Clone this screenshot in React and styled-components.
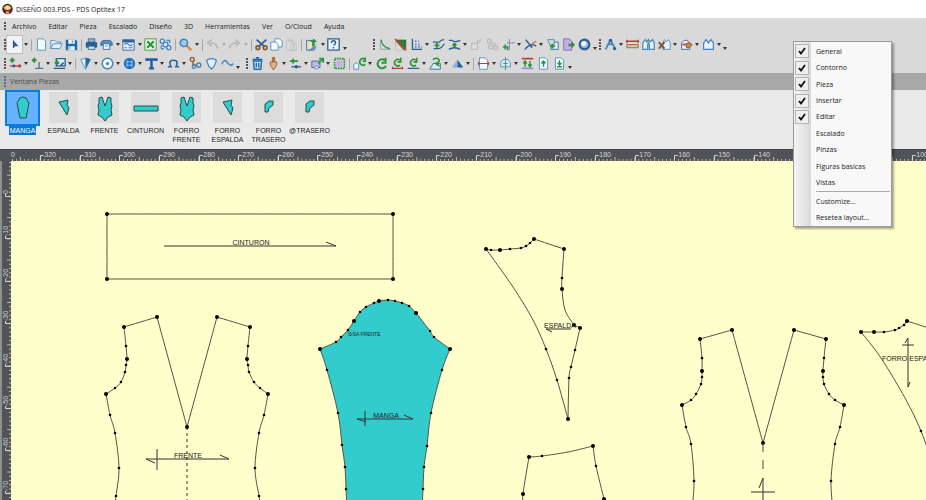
import React, { useEffect, useState } from "react";
import styled, { createGlobalStyle, css } from "styled-components";

const GlobalStyle = createGlobalStyle`
  *, *::before, *::after { box-sizing: border-box; }
  body { margin: 0; overflow: hidden; }
  button, input { margin: 0; padding: 0; border: 0; background: none; font: inherit; color: inherit; }
  ul { margin: 0; padding: 0; list-style: none; }
`;

const uiFont = `"Open Sans", "Noto Sans", sans-serif`;
const cadFont = `"Liberation Sans", Arial, sans-serif`;

const Window = styled.div`
  position: relative;
  display: flex;
  flex-direction: column;
  height: 100vh;
  overflow: hidden;
  background: #d9d9d9;
  color: #222;
  font-family: ${uiFont};
  font-size: 7px;
`;

const TitleBar = styled.header`
  display: flex;
  flex: none;
  align-items: center;
  gap: 3px;
  height: 18px;
  padding-left: 2px;
  background: #fff;
  color: #222;
`;

const Title = styled.h1`
  margin: 0;
  font-size: 7px;
  font-weight: 400;
  white-space: nowrap;
`;

const MenuBar = styled.nav`
  display: flex;
  flex: none;
  align-items: center;
  gap: 12px;
  height: 17px;
  padding-left: 3px;
`;

const MenuButton = styled.button`
  color: #222;
  white-space: nowrap;
`;

const Grip = styled.span`
  flex: none;
  width: 4px;
  height: 12px;
  background: radial-gradient(circle at 2px 1px, #555 1px, transparent 1px) 0 0 / 4px 3px;
`;

const MenuGrip = styled(Grip)`
  height: 9px;
  margin-right: -7px;
`;

const ToolRow = styled.div`
  display: flex;
  flex: none;
  align-items: center;
  height: 19px;
  padding-left: 3px;
`;

const ToolGroup = styled.div`
  display: flex;
  align-items: center;
  margin-left: ${(p) => p.$before || 0}px;
`;

const ToolButton = styled.button`
  display: grid;
  place-items: center;
  width: ${(p) => (p.$wide ? 16 : 15)}px;
  height: 17px;
  opacity: ${(p) => (p.disabled ? 0.75 : 1)};
  ${(p) =>
    p.$active &&
    css`
      background: #f3f3f3;
      outline: 1px solid #bdbdbd;
    `}
`;

const DropButton = styled.button`
  display: grid;
  place-items: center;
  width: ${(p) => (p.$wide ? 6 : 7)}px;
  height: 17px;
  ${(p) => p.$overflow && css`padding-top: 7px;`}
  &::after {
    content: "";
    border: 2px solid transparent;
    border-top: 3px solid ${(p) => (p.disabled ? "#aaa" : "#333")};
    border-bottom: 0;
  }
`;

const Separator = styled.span`
  width: ${(p) => (p.$wide ? 4 : 5)}px;
  height: 12px;
  background: linear-gradient(#a6a6a6, #a6a6a6) center / 1px 100% no-repeat;
`;

const PanelTitle = styled.h2`
  display: flex;
  flex: none;
  align-items: center;
  gap: 3px;
  height: 17px;
  margin: 0;
  padding-left: 4px;
  background: #a8a8a8;
  color: #4c4c4c;
  font-size: 7px;
  font-weight: 400;
`;

const PanelGrip = styled(Grip)`
  width: 3px;
  background: radial-gradient(circle at 1px 1px, #4f6f9c 1px, transparent 1px) 0 0 / 3px 3px;
`;

const PieceStrip = styled.div`
  display: flex;
  flex: none;
  height: 59px;
  padding-left: 2px;
  background: #eaeaea;
`;

const PieceButton = styled.button`
  display: flex;
  flex-direction: column;
  align-items: center;
  width: 41px;
  font-family: ${cadFont};
  font-size: 7px;
  line-height: 9px;
`;

const Thumb = styled.span`
  display: grid;
  place-items: center;
  width: ${(p) => (p.$selected ? 35 : 29)}px;
  height: ${(p) => (p.$selected ? 36 : 31)}px;
  margin: ${(p) => (p.$selected ? "0" : "2px 0 3px")};
  background: ${(p) => (p.$selected ? "#66b2ff" : "#dcdcdc")};
  border: ${(p) => (p.$selected ? "2px solid #0a7be0" : "0")};
`;

const PieceLabel = styled.span`
  padding: 0 1px;
  background: ${(p) => (p.$selected ? "#0a78d7" : "transparent")};
  color: ${(p) => (p.$selected ? "#fff" : "#222")};
`;

const Workspace = styled.main`
  display: grid;
  flex: 1;
  grid-template: 11px minmax(0, 1fr) / 11px minmax(0, 1fr);
  min-height: 0;
  background: #525358;
  border-top: 1px solid #3d3f40;
`;

const TopRuler = styled.svg`
  grid-column: 1 / 3;
  display: block;
  width: 100%;
  height: 11px;
`;

const SideRuler = styled.svg`
  display: block;
  width: 11px;
  height: 100%;
  border-left: 2px solid #8b9090;
`;

const Board = styled.svg`
  display: block;
  width: 100%;
  height: 100%;
  background: #ffffcc;
`;

const Popup = styled.form`
  position: absolute;
  top: 41px;
  right: 34px;
  width: 99px;
  padding: 1px;
  border: 1px solid #999;
  background: linear-gradient(90deg, #f4f4f4, #d9d9d9 17px, #f8f8f8 17px);
  box-shadow: 2px 2px 2px rgba(0, 0, 0, 0.35);
`;

const ToggleList = styled.ul`
  display: grid;
  grid-template-rows: repeat(9, 1fr);
  height: 148px;
`;

const Toggle = styled.label`
  display: grid;
  grid-template-columns: 14px 1fr;
  align-items: center;
  gap: 7px;
  height: 100%;
  white-space: nowrap;
`;

const ToggleBox = styled.span`
  display: grid;
  place-items: center;
  > * { grid-area: 1 / 1; }
`;

const ToggleInput = styled.input`
  appearance: none;
  width: 14px;
  height: 14px;
  border: 1px solid transparent;
  &:checked {
    background: #eee;
    border-color: #b3b3b3;
  }
`;

const PopupRule = styled.hr`
  height: 1px;
  margin: 0 0 1px 21px;
  border: 0;
  background: #aaa;
`;

const PopupAction = styled.button`
  display: block;
  height: 16px;
  padding-left: 21px;
  white-space: nowrap;
`;

/* ---------- toolbar drawings, 16 x 16 ---------- */
const navy = "#2b5f94";
const blue = "#4385bd";
const green = "#2a9438";
const red = "#c3393b";
const page = <path d="M3 1h7l3 3v11H3z" fill="#f6faff" stroke={blue} />;
const plusAt = (x, y) => (
  <path d={`M${x} ${y - 3}v6M${x - 3} ${y}h6`} stroke={green} strokeWidth="2.4" />
);
const turn = (
  <path d="M11 4a4 4 0 1 0 0 6M12 1v5H8" stroke={green} strokeWidth="2" />
);

const drawings = {
  pointer: <path d="M6 2v11l3-3h4z" fill={navy} />,
  fresh: page,
  open: <path d="M1 13V3h5l2 2h5v2M1 13 4 7h11l-3 6z" fill="#e3eef8" stroke={blue} />,
  save: (
    <>
      <path d="M1 2h12l2 2v11H1z" fill="#1c69a5" />
      <path d="M4 2h8v5H4zM4 10h8v5H4z" fill="#edf4fa" />
      <path d="M9 3v3M6 11v3" stroke="#1c69a5" />
    </>
  ),
  print: (
    <>
      <path d="M4 1h8v4H4z" fill="#8db5d8" stroke={navy} />
      <path d="M2 5h12l1 1v5l-1 1H2l-1-1V6z" fill={navy} />
      <path d="M4 10h8v4H4z" fill="#cfe1f0" stroke={navy} />
    </>
  ),
  plotter: (
    <>
      <path d="M1 9V6q1-3 4-3h6q3 0 4 3v3z" fill="#5c8fbe" stroke={navy} />
      <path d="M4 7h8v7H4z" fill="#eef5fb" stroke={navy} />
      <path d="M6 9q2 3 4 0" stroke={blue} />
    </>
  ),
  table: (
    <>
      <path d="M1 2h14v13H1z" fill="#e3eef8" stroke={navy} />
      <path d="M1 4h14" stroke={navy} strokeWidth="3" />
      <path d="M3 8q3-3 5 0t5 0M3 12h3M8 12h5" stroke={blue} strokeWidth="1.5" />
    </>
  ),
  excel: (
    <>
      <path d="M1 1h14v14H1z" fill="#e5f3e5" stroke={green} />
      <path d="m4 4 8 8M12 4l-8 8" stroke={green} strokeWidth="2.6" />
    </>
  ),
  link: (
    <g stroke={blue} strokeWidth="1.6" fill="#d9e8f5">
      <circle cx="4" cy="4" r="2.5" />
      <circle cx="8" cy="8" r="3" />
      <circle cx="12" cy="12" r="2.5" />
      <path d="M9 3h4v3M3 9v4h3" />
    </g>
  ),
  zoom: (
    <>
      <path d="m9 9 6 6" stroke="#d48a38" strokeWidth="3" />
      <circle cx="6" cy="6" r="4.5" fill="#9cc9e8" stroke={blue} strokeWidth="2" />
    </>
  ),
  undo: <path d="M14 13q0-7-9-7M7 2 2 6l5 4" stroke="#adadad" strokeWidth="2" />,
  redo: <path d="M2 13q0-7 9-7M9 2l5 4-5 4" stroke="#adadad" strokeWidth="2" />,
  cut: (
    <>
      <path d="m2 2 10 9M14 2 4 11" stroke={navy} strokeWidth="2.2" />
      <circle cx="3.5" cy="12" r="2.3" stroke="#87592f" strokeWidth="2" />
      <circle cx="12.5" cy="12" r="2.3" stroke="#87592f" strokeWidth="2" />
    </>
  ),
  copy: (
    <g fill="#f4f9fd" stroke={blue}>
      <path d="M6 1h6l3 3v7H6z" />
      <path d="M1 5h6l3 3v7H1z" />
    </g>
  ),
  paste: (
    <g fill="#dedede" stroke="#b5b5b5">
      <path d="M2 3h9v12H2zM4 1h5v3H4zM7 7h7v8H7zM9 10h3M9 12h3" />
    </g>
  ),
  exporter: (
    <>
      <path d="M2 3h8v12H2z" fill="#f1dfc4" stroke={navy} />
      <path d="M3 15 15 9l-3 6z" fill="#5c93c2" />
      <path d="M9 10V5H6l5-4 4 4h-3v5z" fill={green} />
    </>
  ),
  help: (
    <>
      <path d="M1 1h14v14H1z" fill="#edf5fb" stroke={navy} strokeWidth="1.6" />
      <path d="M5.500 6q0-2.500 2.500-2.500T10.500 6Q10.500 7.500 8 9M8 11v2" stroke={navy} strokeWidth="1.8" />
    </>
  ),
  corner: (
    <>
      <path d="M3 2v12h12" stroke="#7d9aa0" />
      <path d="M4 2q1 10 11 11" stroke={green} strokeWidth="1.4" />
    </>
  ),
  split: (
    <>
      <path d="M2 2h13v13H2z" fill="#2e7a38" />
      <path d="M2 4v11h10z" fill="#d9d9d9" />
      <path d="m1 1 14 14" stroke="#e03b30" strokeWidth="1.8" />
    </>
  ),
  notches: (
    <>
      <path d="M3 1v13h12" stroke={navy} strokeWidth="1.6" />
      <path d="M6 4h5M6 8h7M6 11h9" stroke={blue} strokeWidth="2" strokeDasharray="2 2" />
    </>
  ),
  curveIn: (
    <>
      <path d="M1 5h8q2-3 6-3M2 13h5q5 0 8-6" stroke={navy} strokeWidth="1.6" />
      <path d="M3 9h6M6 6v6" stroke={green} strokeWidth="2.200" />
    </>
  ),
  curveMid: (
    <>
      <path d="M1 3h4q4 3 10 0M1 14q7-4 14 0" stroke={navy} strokeWidth="1.6" />
      <circle cx="8" cy="8.500" r="2.600" fill={green} />
    </>
  ),
  ghostJoin: (
    <g stroke="#b4b4b4" fill="#e2e2e2" strokeWidth="1.5">
      <path d="M2 7h7v7H2zM7 7l7-5M9 2l3 4" />
    </g>
  ),
  ghostLink: (
    <g stroke="#b4b4b4" strokeWidth="1.8">
      <circle cx="4" cy="4" r="2.500" />
      <circle cx="6" cy="11" r="2.500" />
      <circle cx="12" cy="12" r="2.500" />
      <path d="M8 5l4 4" />
    </g>
  ),
  addLine: (
    <>
      <path d="M1 11h6v4M4 8v6" stroke={green} strokeWidth="2" />
      <path d="M9 1v14M6 6h10" stroke="#8e7bc2" strokeWidth="1.2" />
    </>
  ),
  trim: (
    <>
      <path d="m2 2 8 10M1 14q8-9 14-4" stroke={navy} strokeWidth="1.8" />
      <path d="m10 7 5-3" stroke="#d48a38" strokeWidth="2" />
    </>
  ),
  layers: (
    <>
      <path d="M6 5h9v9H6z" fill="#dcebf8" stroke={navy} />
      <path d="M2 2h8v7H5z" fill="#cbdfce" stroke={blue} />
      {plusAt(8, 10)}
    </>
  ),
  sendOut: (
    <>
      <path d="M2 1h7l3 3v11H2z" fill="#c4aee8" stroke="#7e67ae" />
      <path d="M8 7h4V4l4 4-4 5v-3H8z" fill={green} />
    </>
  ),
  orb: (
    <>
      <circle cx="8" cy="8" r="6" fill="#8fb9dc" stroke={navy} strokeWidth="2.600" />
      <circle cx="7" cy="7" r="3" fill="#fff" />
    </>
  ),
  compass: (
    <>
      <path d="M8 2 2 14M8 2l6 12M4 9q4-3 8 0" stroke={blue} strokeWidth="2.2" />
      <circle cx="8" cy="3" r="2" fill={navy} />
      <circle cx="13" cy="13" r="2" fill={navy} />
    </>
  ),
  measure: (
    <>
      <path d="M1 2v4M15 2v4M1 4h14" stroke={red} strokeWidth="1.8" />
      <path d="M1 8h14v4H1z" fill="#d9bd97" stroke="#855f45" />
    </>
  ),
  vests: (
    <path d="M1 14V6l3-4 2 3 2-3 2 3 3-3 2 4v8H9V8L8 6 7 8v6z" fill="#e8f3fb" stroke={blue} strokeWidth="1.5" />
  ),
  removePiece: (
    <>
      <path d="M6 14V6l2-4 2 3 3-3 2 4v8z" fill="#e8f3fb" stroke={blue} />
      <path d="m1 5 7 8M8 5l-7 8" stroke="#75543a" strokeWidth="2.3" />
    </>
  ),
  bag: (
    <>
      <path d="M2 14V6q3-5 7-3l3 4v7z" fill="#e5ecf5" stroke={navy} />
      <path d="M7 7q5-3 8 1l-3 4H8z" fill="#c98445" stroke="#8d5526" />
      <path d="M3 8h4" stroke={red} strokeWidth="2" />
    </>
  ),
  vest: <path d="M2 14V6l3-4 3 4 3-4 3 4v8z" fill="#e8f3fb" stroke={blue} strokeWidth="1.500" />,
  addPoint: (
    <>
      {plusAt(4, 4)}
      <path d="M1 11h14" stroke={red} strokeWidth="1.600" />
      <circle cx="6" cy="11" r="1.800" fill={navy} />
      <circle cx="13" cy="11" r="2" fill={red} />
    </>
  ),
  addNotch: (
    <>
      {plusAt(4, 4)}
      <path d="M5 14h10M10 6v8" stroke="#5c7181" strokeWidth="1.600" />
    </>
  ),
  addPiece: (
    <>
      <path d="M4 2h11v9H4zM1 14h14" fill="#e3eef8" stroke={navy} strokeWidth="1.600" />
      {plusAt(5, 7)}
      <path d="m9 11 4-4" stroke={navy} strokeWidth="2" />
    </>
  ),
  dart: (
    <>
      <path d="M2 3q6-3 12 0L8 15z" fill="#e3eef8" stroke={blue} />
      <path d="M8 1q4 0 6 2L8 15z" fill="#1c69a5" />
    </>
  ),
  circleDot: (
    <>
      <circle cx="8" cy="8" r="6.500" fill="#f5faff" stroke={blue} strokeWidth="1.800" />
      <circle cx="8" cy="8" r="2" fill={blue} />
    </>
  ),
  button: (
    <>
      <circle cx="8" cy="8" r="7" fill="#1d72bd" />
      <path d="M5 4v8M11 4v8M4 6h8M4 10h8" stroke="#a8cff0" />
    </>
  ),
  text: <path d="M2 5V3h12v2M8 3v11M5 14h6" stroke="#1c5f9f" strokeWidth="3" />,
  omega: <path d="M1 12h4Q1 4 8 4t3 8h4" stroke={navy} strokeWidth="2" />,
  stitch: (
    <>
      <circle cx="4" cy="3" r="2.500" stroke="#9a6436" strokeWidth="1.800" />
      <path d="M5 5v5h5" stroke="#9a6436" strokeWidth="2" />
      <circle cx="6" cy="12" r="2" stroke={blue} strokeWidth="1.500" />
      <circle cx="12" cy="10" r="2.500" stroke={blue} strokeWidth="1.800" />
    </>
  ),
  pleat: <path d="M5 12 2 5q1-3 6-3t6 3l-3 7-3 3z" fill="#e1effa" stroke={blue} strokeWidth="1.500" />,
  wave: <path d="M1 9q3-8 7-2t7 1" stroke={blue} strokeWidth="1.800" />,
  bin: (
    <>
      <path d="M3 5h10l-1 10H4z" fill="#d9edfb" stroke="#1c69a5" strokeWidth="1.800" />
      <path d="M2 3h12M6 1h4M6.500 7v6M9.500 7v6" stroke="#1c69a5" strokeWidth="1.800" />
    </>
  ),
  brush: (
    <>
      <path d="M6 0h4v6H6z" fill="#b8703a" />
      <path d="M4 6h8v4l-4 6-4-6z" fill="#e0b27e" stroke="#8d5a30" />
    </>
  ),
  slide: (
    <>
      <path d="M1 5h10M5 2v6" stroke={green} strokeWidth="2.200" />
      <path d="M3 12h12" stroke={navy} strokeWidth="1.600" />
      <circle cx="9" cy="12" r="2.200" fill={navy} />
    </>
  ),
  movePiece: (
    <>
      <path d="M1 5h10v8H1z" fill="#cbb3e8" stroke={navy} />
      <circle cx="7" cy="13" r="2" fill="#f5faff" stroke={blue} />
      <path d="m9 8 5-5M10 2h5v5" stroke={green} strokeWidth="2" />
    </>
  ),
  selection: (
    <>
      <path d="M2 2h12v12H2z" stroke={green} strokeWidth="2" strokeDasharray="2 1" />
      <path d="M4 4h8v8H4z" fill="#c7b2e8" />
    </>
  ),
  rotatePiece: (
    <>
      <path d="M1 15V9l3-2 3 2v6z" fill="#e8f3fb" stroke={blue} />
      <g transform="translate(4 -1)">{turn}</g>
    </>
  ),
  rotate: <path d="M12 4a5.500 5.500 0 1 0 1.500 7M13 1v6H8" stroke={green} strokeWidth="2.400" />,
  rotateEnds: (
    <>
      {turn}
      <path d="M1 14h14M2 12v3M14 12v3" stroke={red} strokeWidth="1.500" />
    </>
  ),
  rotateBase: (
    <>
      {turn}
      <path d="M1 14h14" stroke={navy} strokeWidth="1.500" />
    </>
  ),
  orient: (
    <>
      <path d="M1 15 5 8h9v7z" fill="#dcebf8" stroke={navy} />
      <path d="M5 3q5-3 7 0t-4 5l5 3" stroke={green} strokeWidth="2" />
    </>
  ),
  flip: (
    <>
      <path d="M8 3v10H1z" fill="#8bb6da" />
      <path d="M8 3v10h7z" fill="#1c5f9f" />
    </>
  ),
  cutPage: (
    <>
      {page}
      <path d="M1 8h14M2 6v4M14 6v4" stroke={red} strokeWidth="1.500" />
    </>
  ),
  unfold: (
    <>
      <path d="M2 12V7l3-4h6l3 4v5z" fill="#dcebf8" stroke={blue} />
      <path d="M8 0v16M5 8h6" stroke="#5c9a80" strokeWidth="1.400" />
    </>
  ),
  swap: (
    <>
      <path d="M1 2h14" stroke={red} strokeWidth="2" />
      <path d="M5 12V6M3 8l2-3 2 3M11 5v6M9 9l2 3 2-3" stroke={green} strokeWidth="1.800" />
      <path d="M1 14h14" stroke="#9c83d4" strokeWidth="2" />
    </>
  ),
  pageUp: (
    <>
      {page}
      <path d="M8 12V6M5.500 8 8 5l2.500 3" stroke={green} strokeWidth="1.800" />
    </>
  ),
  pageDown: (
    <>
      {page}
      <path d="M8 4v5M5.500 7 8 10l2.500-3M5 12h6" stroke={green} strokeWidth="1.600" />
    </>
  ),
};

/* "name" = button, "name-" = disabled button, "v" = arrow, "|" = separator, "~" = overflow arrow */
const toolRows = [
  [
    { name: "General", items: "pointer v | fresh open save | print plotter v table v excel link | zoom v | undo- v- redo- v- | cut copy paste- | exporter v help ~" },
    { name: "Contorno", wide: true, before: 24, items: "corner split notches v curveIn curveMid v ghostJoin- ghostLink- addLine v trim v layers sendOut orb ~" },
    { name: "Pieza", wide: true, items: "compass v measure vests removePiece v bag v vest v ~" },
  ],
  [
    { name: "Insertar", wide: true, items: "addPoint v addNotch v addPiece v | dart v circleDot v button v text v omega v stitch pleat wave ~" },
    { name: "Editar", wide: true, before: 4, items: "bin brush v slide v movePiece v selection | rotatePiece v rotate rotateEnds rotateBase v orient v flip v | cutPage v unfold v swap pageUp pageDown ~" },
  ],
];

function Toolbar({ name, items, wide, before }) {
  return (
    <ToolGroup role="toolbar" aria-label={name} $before={before}>
      <Grip />
      {items.split(" ").map((item, i) => {
        const disabled = item.endsWith("-");
        const key = disabled ? item.slice(0, -1) : item;
        if (key === "|") return <Separator key={i} $wide={wide} />;
        if (key === "v" || key === "~")
          return (
            <DropButton key={i} $wide={wide} $overflow={key === "~"} disabled={disabled} aria-label="Opciones" />
          );
        return (
          <ToolButton key={i} $wide={wide} $active={key === "pointer"} disabled={disabled} aria-label={key}>
            <svg width="13" height="13" viewBox="0 0 16 16" fill="none">
              {drawings[key]}
            </svg>
          </ToolButton>
        );
      })}
    </ToolGroup>
  );
}

/* ---------- piece thumbnails ---------- */
const thumbShapes = {
  sleeve: "M11 4q3-2 6 0l3 5-3 15h-6L8 9z",
  back: "M9 8l5-1 4-1-1 5 2 3-2 7z",
  body: "M8 4l3-1 3 9 3-9 3 1v5l1 3-1 4 1 5-4 2-3 4-3-4-4-2 1-5-1-4 1-3z",
  belt: "M2 12h24v5H2z",
  rear: "M10 10l4-3h4v4l-4 3-1 4h-3z",
};
const pieces = [
  ["MANGA", "sleeve"],
  ["ESPALDA", "back"],
  ["FRENTE", "body"],
  ["CINTURON", "belt"],
  ["FORRO FRENTE", "body"],
  ["FORRO ESPALDA", "back"],
  ["FORRO TRASERO", "rear"],
  ["@TRASERO", "rear"],
];

/* ---------- pattern geometry ----------
   Each run is a smooth curve of [x, y, node] where node 2 = corner, 1 = curve point, 0 = none. */
const patterns = [
  { runs: [[[107, 214, 2], [393, 214, 2]], [[393, 214], [393, 279, 2]], [[393, 279], [107, 279, 2]], [[107, 279], [107, 214]]] },
  {
    runs: [
      [[187, 427, 2], [157, 317, 2]],
      [[157, 317], [124, 327, 2]],
      [[124, 327], [126, 346, 1], [127, 359, 2], [126, 365, 1], [125, 372, 1], [121, 382, 1], [115, 388, 1], [106, 394, 2]],
      [[106, 394], [110, 415, 1], [115, 433, 1], [119, 468, 1], [116, 496, 1], [114, 510]],
      [[187, 427], [217, 317, 2]],
      [[217, 317], [250, 327, 2]],
      [[250, 327], [248, 346, 1], [247, 359, 2], [248, 365, 1], [249, 372, 1], [254, 382, 1], [260, 388, 1], [268, 394, 2]],
      [[268, 394], [264, 415, 1], [259, 433, 1], [255, 468, 1], [259, 496, 1], [261, 510]],
    ],
  },
  {
    fill: "#33cccc",
    outline: [
      [[347, 510], [346, 489, 1], [345, 467, 1], [342, 445, 1], [338, 413, 1], [327, 370, 1], [320, 349, 2]],
      [[320, 349], [336, 342, 1], [341, 337, 1], [348, 330, 1], [354, 321, 2], [360, 312, 1], [366, 307, 1], [374, 303, 1], [379, 301, 2], [388, 300, 1], [395, 301, 1], [402, 303, 1], [409, 306, 1], [416, 313, 2], [430, 331, 1], [434, 337, 1], [450, 349, 2]],
      [[450, 349], [442, 370, 1], [431, 413, 1], [427, 446, 1], [424, 467, 1], [423, 489, 1], [422, 510]],
    ],
  },
  {
    runs: [
      [[486, 249, 2], [491, 250, 1], [500, 250, 2], [510, 249, 1], [521, 248, 1], [526, 246, 1], [530, 243, 1], [534, 239, 2]],
      [[534, 239], [564, 249, 2]],
      [[564, 249], [562, 278, 1], [562, 289, 2], [565, 310], [574, 325, 2]],
      [[574, 325], [580, 328, 2]],
      [[580, 328], [575, 350, 1], [571, 367, 1], [569, 378, 1], [568, 419, 2]],
      [[486, 249], [513, 287], [533, 320], [546, 349, 1], [557, 380, 1], [568, 419]],
    ],
  },
  {
    runs: [
      [[523, 510], [523, 494, 2], [529, 457, 2]],
      [[529, 457], [542, 456, 1], [568, 452], [593, 446, 2]],
      [[593, 446], [596, 466, 1], [604, 499, 2]],
    ],
  },
  {
    runs: [
      [[763, 443, 2], [732, 330, 2]],
      [[732, 330], [700, 339, 2]],
      [[700, 339], [702, 358, 1], [702, 371, 2], [702, 377, 1], [701, 384, 1], [696, 394, 1], [691, 400, 1], [682, 405, 2]],
      [[682, 405], [686, 427, 1], [691, 444, 1], [694, 481, 1], [692, 510]],
      [[763, 443], [794, 330, 2]],
      [[794, 330], [826, 339, 2]],
      [[826, 339], [824, 358, 1], [823, 371, 2], [823, 377, 1], [824, 384, 1], [829, 394, 1], [835, 400, 1], [844, 405, 2]],
      [[844, 405], [840, 427, 1], [835, 444, 1], [831, 481, 1], [833, 510]],
    ],
  },
  {
    runs: [
      [[861, 332, 2], [874, 332, 2], [884, 332, 1], [895, 330, 1], [899, 328, 1], [904, 325, 1], [907, 321, 2]],
      [[907, 321], [938, 331, 2]],
      [[861, 332], [881, 358], [905, 398], [921, 431, 1], [932, 463, 1]],
    ],
  },
];

function curve(points, first) {
  let d = `${first ? "M" : "L"}${points[0][0]} ${points[0][1]}`;
  for (let i = 0; i < points.length - 1; i++) {
    const a = points[i - 1] || points[i];
    const b = points[i];
    const c = points[i + 1];
    const e = points[i + 2] || c;
    d += `C${b[0] + (c[0] - a[0]) / 6} ${b[1] + (c[1] - a[1]) / 6} ${c[0] - (e[0] - b[0]) / 6} ${c[1] - (e[1] - b[1]) / 6} ${c[0]} ${c[1]}`;
  }
  return d;
}

function Pattern({ runs, outline, fill = "none" }) {
  const list = outline || runs;
  const d = list.map((run, i) => curve(run, outline ? i === 0 : true)).join("");
  return (
    <g>
      <path d={d} fill={fill} stroke="#55553f" />
      {list.flat().map(([x, y, node], i) =>
        node ? <circle key={i} cx={x} cy={y} r={node === 2 ? 2 : 1.3} fill="#000" /> : null
      )}
    </g>
  );
}

const grainLines =
  "M164 246H336L326 242M146 459H229L220 455M146 459L155 463M157 449V470M357 419H413L404 415M357 419L366 422M365 411V426M571 329H546L552 332M763 478V510M763 478L759 488M751 492H775M908 338V387M908 338L905 343M902 345H914M908 387L910 382";

const boardLabels = [
  [251, 245, "CINTURON"],
  [188, 458, "FRENTE"],
  [386, 418, "MANGA"],
  [560, 328, "ESPALDA"],
];

const range = (n) => Array.from({ length: Math.max(0, n) }, (_, i) => i);

function HorizontalRuler({ length }) {
  const step = 39.64;
  return (
    <TopRuler fill="#d5d5d5" fontFamily={cadFont} fontSize="7">
      {range(Math.ceil((length - 12) / (step / 10))).map((i) => (
        <rect key={i} x={12 + i * (step / 10)} y={i % 5 === 2 ? 7 : 9} width="1" height="4" opacity="0.8" />
      ))}
      <text x="11" y="7">0</text>
      {range(Math.ceil((length - 40) / step)).map((i) => (
        <g key={i} transform={`translate(${Math.round(40 + i * step)} 0)`}>
          <path d="M0.500 11V5.500H3" fill="none" stroke="#d5d5d5" />
          <text x="2" y="7">{-320 + i * 10}</text>
        </g>
      ))}
    </TopRuler>
  );
}

function VerticalRuler({ length }) {
  const step = 42.4;
  return (
    <SideRuler fill="#d5d5d5" fontFamily={cadFont} fontSize="7">
      {range(Math.ceil(length / (step / 10))).map((i) => (
        <rect key={i} x={i % 5 === 3 ? 5 : 7} y={1 + i * (step / 10)} width="4" height="1" opacity="0.8" />
      ))}
      {range(Math.ceil((length - 35) / step)).map((i) => (
        <g key={i} transform={`translate(0 ${Math.round(35 + i * step)})`}>
          <path d="M9 0.500H3.500V-2" fill="none" stroke="#d5d5d5" />
          <text transform="rotate(-90)" x="2" y="6">{i ? -10 * i : 0}</text>
        </g>
      ))}
    </SideRuler>
  );
}

function useWindowSize() {
  const read = () => ({ width: window.innerWidth, height: window.innerHeight });
  const [size, setSize] = useState(read);
  useEffect(() => {
    const update = () => setSize(read());
    window.addEventListener("resize", update);
    return () => window.removeEventListener("resize", update);
  }, []);
  return size;
}

const menus = ["Archivo", "Editar", "Pieza", "Escalado", "Diseño", "3D", "Herramientas", "Ver", "O/Cloud", "Ayuda"];
const toggles = ["General", "Contorno", "Pieza", "Insertar", "Editar", "Escalado", "Pinzas", "Figuras basicas", "Vistas"];

export default function App() {
  const { width, height } = useWindowSize();
  const [shown, setShown] = useState(toggles.slice(0, 5));
  const [selected, setSelected] = useState("MANGA");
  const flip = (name) =>
    setShown((now) => (now.includes(name) ? now.filter((n) => n !== name) : [...now, name]));

  return (
    <Window>
      <GlobalStyle />
      <TitleBar>
        <svg width="11" height="12" viewBox="0 0 22 24">
          <circle cx="11" cy="12" r="10.500" fill="#3d2323" />
          <path d="M3 9q8-10 16 0l-3 5H6z" fill="#e3c23f" />
          <path d="M4 13h14l-3 8H7z" fill="#a42734" />
          <circle cx="11" cy="10" r="3.500" fill="#f7ecc8" />
          <path d="M7 21q4-8 8 0z" fill="#ded4c5" />
        </svg>
        <Title>DISEÑO 003.PDS - PDS Optitex 17</Title>
      </TitleBar>
      <MenuBar>
        <MenuGrip />
        {menus.map((m) => (
          <MenuButton key={m}>{m}</MenuButton>
        ))}
      </MenuBar>
      {toolRows.map((row, i) => (
        <ToolRow key={i}>
          {row.map((bar) => (
            <Toolbar key={bar.name} {...bar} />
          ))}
        </ToolRow>
      ))}
      <PanelTitle>
        <PanelGrip />
        Ventana Piezas
      </PanelTitle>
      <PieceStrip>
        {pieces.map(([name, shape]) => (
          <PieceButton key={name} onClick={() => setSelected(name)}>
            <Thumb $selected={name === selected}>
              <svg width="28" height="28" viewBox="0 0 28 28">
                <path d={thumbShapes[shape]} fill="#33cccc" stroke="#1f4f4f" />
              </svg>
            </Thumb>
            <PieceLabel $selected={name === selected}>{name}</PieceLabel>
          </PieceButton>
        ))}
      </PieceStrip>
      <Workspace>
        <HorizontalRuler length={width} />
        <VerticalRuler length={height - 161} />
        <Board fontFamily={cadFont} fontSize="7" fill="#222">
          <g transform="translate(-11 -161)">
            {patterns.map((p, i) => (
              <Pattern key={i} {...p} />
            ))}
            <path d="M187 427V520" stroke="#333" strokeDasharray="3 3" />
            <path d="M763 443V452M763 460V469" stroke="#444" />
            <path d={grainLines} fill="none" stroke="#333" />
            {boardLabels.map(([x, y, label]) => (
              <text key={label} x={x} y={y} textAnchor="middle">{label}</text>
            ))}
            <text x="348" y="336" fontSize="5">SISA FRENTE</text>
            <text x="882" y="361">FORRO ESPALDA</text>
          </g>
        </Board>
      </Workspace>
      <Popup aria-label="Barras de herramientas">
        <ToggleList>
          {toggles.map((name) => (
            <li key={name}>
              <Toggle>
                <ToggleBox>
                  <ToggleInput type="checkbox" checked={shown.includes(name)} onChange={() => flip(name)} />
                  {shown.includes(name) && (
                    <svg width="8" height="8" viewBox="0 0 8 8" pointerEvents="none">
                      <path d="M1 4l2 2.500L7 1" fill="none" stroke="#111" strokeWidth="1.800" />
                    </svg>
                  )}
                </ToggleBox>
                {name}
              </Toggle>
            </li>
          ))}
        </ToggleList>
        <PopupRule />
        <PopupAction type="button">Customize...</PopupAction>
        <PopupAction type="button">Resetea layout...</PopupAction>
      </Popup>
    </Window>
  );
}
